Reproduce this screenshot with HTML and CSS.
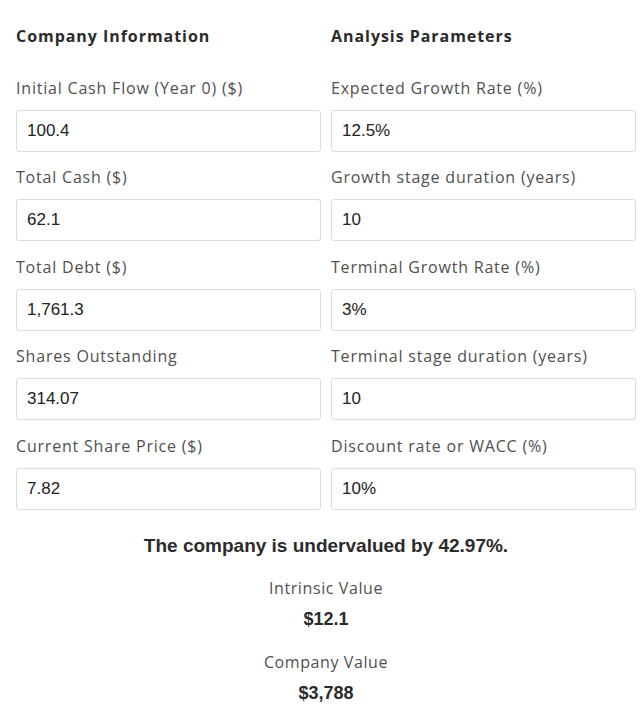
FILE: index.html
```html
<!DOCTYPE html>
<html>
<head>
<meta charset="utf-8">
<link rel="stylesheet" href="styles.css">
</head>
<body>
<div class="calc">
  <div class="columns">
    <div class="col">
      <h3 class="col-title">Company Information</h3>
      <div class="field"><label class="label">Initial Cash Flow (Year 0) ($)</label><div class="input">100.4</div></div>
      <div class="field"><label class="label">Total Cash ($)</label><div class="input">62.1</div></div>
      <div class="field"><label class="label">Total Debt ($)</label><div class="input">1,761.3</div></div>
      <div class="field"><label class="label">Shares Outstanding</label><div class="input">314.07</div></div>
      <div class="field"><label class="label">Current Share Price ($)</label><div class="input">7.82</div></div>
    </div>
    <div class="col">
      <h3 class="col-title">Analysis Parameters</h3>
      <div class="field"><label class="label">Expected Growth Rate (%)</label><div class="input">12.5%</div></div>
      <div class="field"><label class="label">Growth stage duration (years)</label><div class="input">10</div></div>
      <div class="field"><label class="label">Terminal Growth Rate (%)</label><div class="input">3%</div></div>
      <div class="field"><label class="label">Terminal stage duration (years)</label><div class="input">10</div></div>
      <div class="field"><label class="label">Discount rate or WACC (%)</label><div class="input">10%</div></div>
    </div>
  </div>
  <div class="result">
    <div class="verdict">The company is undervalued by 42.97%.</div>
    <div class="metric-label">Intrinsic Value</div>
    <div class="metric-value">$12.1</div>
    <div class="metric-label">Company Value</div>
    <div class="metric-value">$3,788</div>
  </div>
</div>
</body>
</html>
```
FILE: styles.css
```css
* { box-sizing: border-box; }
html, body { margin: 0; padding: 0; background: #fff; }
body { font-family: "Open Sans", Lato, sans-serif; color: #333; }
.calc { width: 636px; padding: 24px 0 0 16px; }
.columns { display: grid; grid-template-columns: 305px 305px; column-gap: 10px; }
.col-title { margin: 0 0 28.5px; font-size: 16px; line-height: 24px; font-weight: 700; color: #2b2b2b; letter-spacing: 0.95px; }
.field { margin-bottom: 14.5px; }
.label { display: block; font-size: 16px; line-height: 23px; color: #505050; margin-bottom: 10px; letter-spacing: 0.8px; }
.input { height: 42px; border: 1px solid #dcdcdc; border-radius: 3px; padding: 0 10px; display: flex; align-items: center; font-family: "Liberation Sans", Arial, sans-serif; font-size: 17px; color: #222; }
.result { text-align: center; padding-top: 9px; }
.verdict { font-family: "Liberation Sans", Arial, sans-serif; font-weight: 700; font-size: 19px; line-height: 26px; color: #2b2b2b; margin-bottom: 17px; }
.metric-label { font-size: 16px; line-height: 24px; color: #505050; letter-spacing: 0.6px; }
.metric-value { font-family: "Liberation Sans", Arial, sans-serif; font-weight: 700; font-size: 18px; line-height: 26px; color: #2b2b2b; margin: 6px 0 18px; }
```
